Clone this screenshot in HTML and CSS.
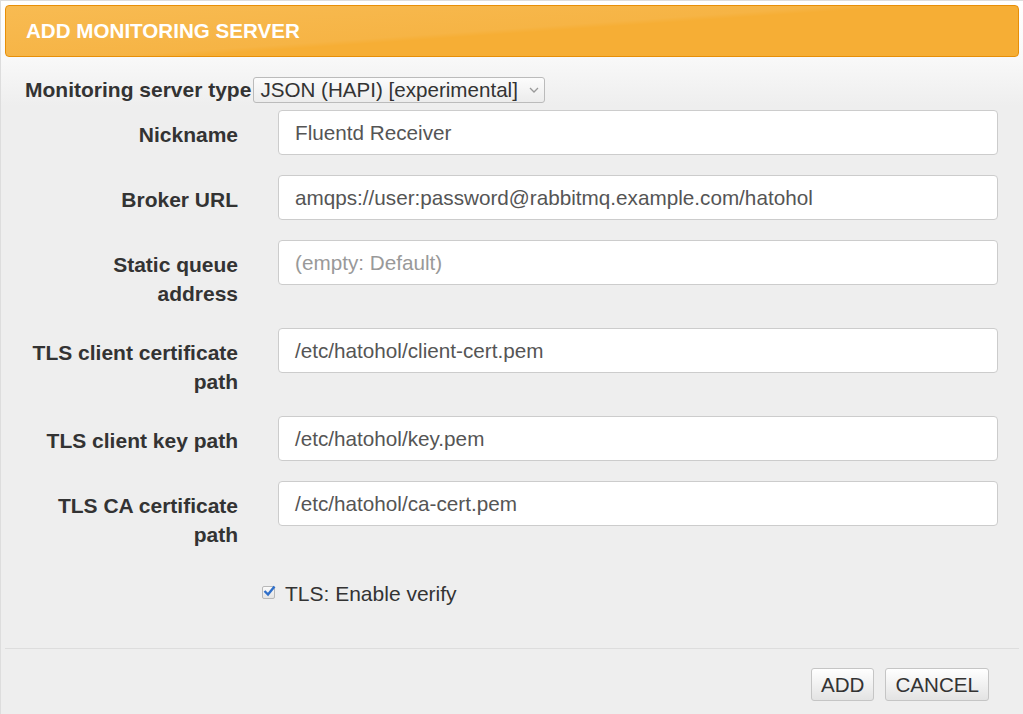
FILE: index.html
```html
<!DOCTYPE html>
<html>
<head>
<meta charset="utf-8">
<link rel="stylesheet" href="styles.css">
</head>
<body>
<div class="dialog">
  <div class="titlebar"><span class="title">ADD MONITORING SERVER</span></div>
  <div class="content">
    <div class="type-row">
      <span class="type-label">Monitoring server type</span>
      <div class="select">
        <span>JSON (HAPI) [experimental]</span>
        <svg class="chev" width="10" height="6" viewBox="0 0 10 6"><path d="M1 1 L5 5 L9 1" fill="none" stroke="#999" stroke-width="1.3"/></svg>
      </div>
    </div>
    <div class="form">
      <div class="label">Nickname</div>
      <div class="input">Fluentd Receiver</div>
      <div class="label">Broker URL</div>
      <div class="input">amqps://user:password@rabbitmq.example.com/hatohol</div>
      <div class="label">Static queue<br>address</div>
      <div class="input placeholder">(empty: Default)</div>
      <div class="label">TLS client certificate<br>path</div>
      <div class="input">/etc/hatohol/client-cert.pem</div>
      <div class="label">TLS client key path</div>
      <div class="input">/etc/hatohol/key.pem</div>
      <div class="label">TLS CA certificate<br>path</div>
      <div class="input">/etc/hatohol/ca-cert.pem</div>
      <div class="spacer"></div>
      <div class="check-row">
        <span class="checkbox"><svg width="14" height="14" viewBox="0 0 14 14"><path d="M2.5 7 L6 10.5 L12.5 2.5" fill="none" stroke="#2f6fc9" stroke-width="2.4"/></svg></span>
        <span class="check-text">TLS: Enable verify</span>
      </div>
    </div>
  </div>
  <div class="buttonpane">
    <button class="btn">ADD</button>
    <button class="btn">CANCEL</button>
  </div>
</div>
</body>
</html>
```

FILE: styles.css
```css
html, body {
  margin: 0;
  padding: 0;
  overflow: hidden;
  background: #eeeeee;
  font-family: "Liberation Sans", Arial, sans-serif;
  color: #333;
}
.dialog {
  width: 1014px;
  height: 760px;
  border: 1px solid #dddddd;
  padding: 4px;
  background: linear-gradient(to bottom, #ffffff 0px, #f8f8f8 60px, #eeeeee 105px, #eeeeee 100%);
}
.titlebar {
  height: 50px;
  border: 1px solid #e78f08;
  border-radius: 4px;
  background: linear-gradient(176deg, #f8bb52 0%, #f6b445 48%, #f6ae35 52%, #f6ae35 100%);
  display: flex;
  align-items: center;
  padding-left: 20px;
}
.title {
  color: #fff;
  font-weight: bold;
  font-size: 20.6px;
}
.content {
  padding-top: 19px;
}
.type-row {
  display: flex;
  align-items: center;
  padding-left: 20px;
  height: 27px;
}
.type-label {
  font-weight: bold;
  font-size: 21px;
}
.select {
  margin-left: 2px;
  width: 292px;
  height: 26px;
  border: 1px solid #bbbbbb;
  border-radius: 3px;
  background: linear-gradient(to bottom, #fcfcfc, #ececec);
  display: flex;
  align-items: center;
  justify-content: space-between;
  padding: 0 5px 0 6px;
  box-sizing: border-box;
  font-size: 20.6px;
  color: #333;
}
.chev { margin-top: 1px; }
.form {
  display: grid;
  grid-template-columns: 233px 720px;
  column-gap: 40px;
  row-gap: 20px;
  margin-top: 7px;
  align-items: start;
}
.label {
  font-weight: bold;
  font-size: 21px;
  line-height: 29px;
  padding-top: 10px;
  text-align: right;
}
.input {
  height: 45px;
  box-sizing: border-box;
  border: 1px solid #cccccc;
  border-radius: 4px;
  background: #fff;
  padding: 0 16px;
  display: flex;
  align-items: center;
  font-size: 20.7px;
  color: #555;
}
.input.placeholder { color: #999; }
.check-row {
  position: relative;
  padding-top: 10px;
  line-height: 29px;
  font-size: 21px;
  padding-left: 7px;
}
.checkbox {
  position: absolute;
  left: -16px;
  top: 17px;
  width: 13px;
  height: 13px;
  box-sizing: border-box;
  border: 1px solid #b8b8b8;
  border-radius: 2px;
  background: linear-gradient(to bottom, #fafafa, #e4e4e4);
}
.checkbox svg { position: absolute; left: -1px; top: -3px; }
.buttonpane {
  margin-top: 40px;
  border-top: 1px solid #dddddd;
  padding-top: 19px;
  padding-right: 30px;
  display: flex;
  justify-content: flex-end;
  gap: 11px;
}
.btn {
  font-family: "Liberation Sans", Arial, sans-serif;
  font-size: 20.6px;
  color: #333;
  height: 33px;
  padding: 0 9px;
  border: 1px solid #c5c5c5;
  border-radius: 3px;
  background: linear-gradient(to bottom, #ffffff, #e3e3e3);
}
```
